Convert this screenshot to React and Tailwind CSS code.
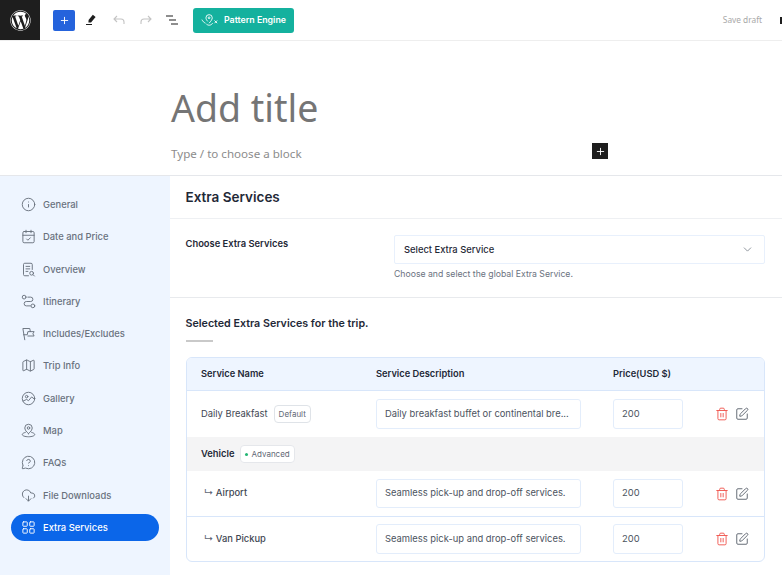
import React from 'react';
import { Info, CalendarCheck, Map as MapIcon, MessageCircleQuestion, CloudDownload, LayoutGrid, ChevronDown, Trash2, SquarePen, Plus } from 'lucide-react';
import { FaWordpress } from 'react-icons/fa';

const OverviewIcon = (props) => (
  <svg viewBox="0 0 24 24" fill="none" stroke="currentColor" strokeLinecap="round" strokeLinejoin="round" {...props}>
    <path d="M12 22H6a2 2 0 0 1-2-2V4a2 2 0 0 1 2-2h10a2 2 0 0 1 2 2v8" />
    <path d="M8 7h6M8 11h6M8 15h3" />
    <circle cx="17" cy="18" r="3" />
    <path d="m19.500 20.500 2 2" />
  </svg>
);

const ItineraryIcon = (props) => (
  <svg viewBox="0 0 24 24" fill="none" stroke="currentColor" strokeLinecap="round" strokeLinejoin="round" {...props}>
    <circle cx="5" cy="5" r="3" />
    <circle cx="19" cy="19" r="3" />
    <path d="M11 5h4.500a3.500 3.500 0 0 1 0 7h-7a3.500 3.500 0 0 0 0 7H15" />
  </svg>
);

const FlagsIcon = (props) => (
  <svg viewBox="0 0 24 24" fill="none" stroke="currentColor" strokeLinecap="round" strokeLinejoin="round" {...props}>
    <path d="M6 22 3 4h11l1 5" />
    <path d="M4 14h6l1-5h10l-2 3.500 2 3.500H11" />
  </svg>
);

const GalleryIcon = (props) => (
  <svg viewBox="0 0 24 24" fill="none" stroke="currentColor" strokeLinecap="round" strokeLinejoin="round" {...props}>
    <circle cx="12" cy="12" r="10" />
    <circle cx="9" cy="9" r="2" />
    <path d="M3.500 16 9 13.500l3 2 5-6 4.500 3.500" />
  </svg>
);

const MapPinIcon = (props) => (
  <svg viewBox="0 0 24 24" fill="none" stroke="currentColor" strokeLinecap="round" strokeLinejoin="round" {...props}>
    <path d="M12 17s-6-4.500-6-9a6 6 0 0 1 12 0c0 4.500-6 9-6 9Z" />
    <circle cx="12" cy="8" r="2" />
    <path d="M7 15c-3 .8-5 2-5 3.500C2 20.500 6.500 22 12 22s10-1.500 10-3.500c0-1.500-2-2.700-5-3.500" />
  </svg>
);

const navItems = [
  { label: 'General', Icon: Info },
  { label: 'Date and Price', Icon: CalendarCheck },
  { label: 'Overview', Icon: OverviewIcon },
  { label: 'Itinerary', Icon: ItineraryIcon },
  { label: 'Includes/Excludes', Icon: FlagsIcon },
  { label: 'Trip Info', Icon: MapIcon },
  { label: 'Gallery', Icon: GalleryIcon },
  { label: 'Map', Icon: MapPinIcon },
  { label: 'FAQs', Icon: MessageCircleQuestion },
  { label: 'File Downloads', Icon: CloudDownload },
  { label: 'Extra Services', Icon: LayoutGrid, active: true },
];

function Toolbar() {
  return (
    <div className="flex h-[41px] shrink-0 items-center border-b border-[#eeeeee] bg-white">
      <div className="flex h-10 w-10 items-center justify-center self-start bg-[#1e1e1e] text-white">
        <FaWordpress size={21} />
      </div>
      <div className="ml-[13px] flex h-[21px] w-[22px] items-center justify-center rounded-[2px] bg-[#2563dc] text-white">
        <Plus size={11} strokeWidth={2} />
      </div>
      {/* pencil */}
      <svg viewBox="0 0 12 12" className="ml-[10px] h-3 w-3 text-[#1e1e1e]" fill="currentColor">
        <path d="M7.800.800 10.600 3 6 8.400 3.400 8.600 3.600 6Z" />
        <rect x="1" y="10" width="6" height="1" />
      </svg>
      {/* undo */}
      <svg viewBox="0 0 12 10" className="ml-[16px] h-[10px] w-3 text-[#c4c4c4]" fill="none" stroke="currentColor" strokeWidth="1.100">
        <path d="M4 1 1 4l3 3M1 4h7c2 0 3 1.300 3 3v2" />
      </svg>
      {/* redo */}
      <svg viewBox="0 0 12 10" className="ml-[15px] h-[10px] w-3 text-[#c4c4c4]" fill="none" stroke="currentColor" strokeWidth="1.100">
        <path d="m8 1 3 3-3 3M11 4H4C2 4 1 5.300 1 7v2" />
      </svg>
      {/* list view */}
      <svg viewBox="0 0 13 10" className="ml-[14px] h-[10px] w-[13px] text-[#1e1e1e]" fill="none" stroke="currentColor" strokeWidth="1.200">
        <path d="M0 1h7M3 5h7M5 9h7" />
      </svg>
      <div className="ml-[14px] flex h-[25px] w-[101px] items-center justify-center gap-[5px] rounded-[3px] bg-[#14b19e] text-[8.800px] font-semibold text-white">
        <svg viewBox="0 0 20 14" className="h-[13px] w-[18px]" fill="none" stroke="currentColor" strokeWidth="1">
          <path d="M7.500 8c-1.300-1.500-2-2.700-2-4a3.500 3.500 0 0 1 7 0c0 1.800-1.500 3.800-3.500 6" />
          <circle cx="9" cy="4" r="1" />
          <path d="M1 6c1 2 2 3 4 4M6 11c2.500 2 5 1.500 7-1" />
          <path d="m15 7 3 3m0-3-3 3" />
        </svg>
        Pattern Engine
      </div>
      <div className="ml-auto flex items-center">
        <span className="font-['Noto_Sans',sans-serif] text-[8.300px] text-[#a8a8a8]">Save draft</span>
        <span className="ml-[18px] h-[7px] w-[2px] bg-[#1e1e1e]" />
      </div>
    </div>
  );
}

function TitleArea() {
  return (
    <div className="h-[135px] shrink-0 border-b border-[#e5e7eb] bg-white pl-[171px] pt-[41px] font-['Noto_Sans',sans-serif]">
      <div className="text-[37.500px] leading-[52px] text-[#757575]">Add title</div>
      <div className="mt-[9px] flex w-[437px] items-start justify-between">
        <span className="pt-[3px] text-[11.600px] leading-[16px] text-[#8c8c8c]">Type / to choose a block</span>
        <span className="flex h-4 w-4 items-center justify-center bg-[#1e1e1e] text-white">
          <Plus size={11} strokeWidth={2} />
        </span>
      </div>
    </div>
  );
}

function Sidebar() {
  return (
    <div className="flex h-full w-[170px] shrink-0 flex-col bg-[#eef5ff] pl-[11px] pt-[15px]">
      {navItems.map(({ label, Icon, active }) => (
        <div
          key={label}
          className={`mb-[5.300px] flex h-[27px] w-[148px] items-center gap-[7px] rounded-full pl-[10px] text-[9.400px] font-medium ${
            active ? 'bg-[#0b66e9] text-white' : 'text-[#69717d]'
          }`}
        >
          <Icon width={15} height={15} strokeWidth={1.500} />
          <span className="pt-[1px]">{label}</span>
        </div>
      ))}
    </div>
  );
}

function TextBox({ value, className }) {
  return (
    <div className={`flex h-[29.500px] items-center overflow-hidden rounded-[3px] border border-[#e3edfb] bg-white px-2 text-[9.400px] whitespace-nowrap text-[#4b5360] ${className}`}>
      {value}
    </div>
  );
}

function Actions() {
  return (
    <div className="flex items-center gap-[6px] pl-[32px]">
      <Trash2 size={14} strokeWidth={1.600} className="text-[#f0564f]" />
      <SquarePen size={14} strokeWidth={1.600} className="text-[#5b636e]" />
    </div>
  );
}

function ServiceRow({ name, children, desc, className }) {
  return (
    <div className={`grid grid-cols-[175px_237px_70px_1fr] items-center pl-[14.500px] ${className}`}>
      <div className="flex items-center gap-[6px]">{name}{children}</div>
      <TextBox value={desc} className="w-[205px]" />
      <TextBox value="200" className="w-[70px]" />
      <Actions />
    </div>
  );
}

function SubName({ label }) {
  return (
    <span className="pl-[3px] text-[9.400px] font-medium text-[#3f4753]">
      <span className="text-[#5f6875]">↳</span> {label}
    </span>
  );
}

function ExtraServices() {
  return (
    <div className="flex min-w-0 flex-1 flex-col bg-white text-[#1f2937]">
      <div className="flex h-[43px] items-center border-b border-[#eef0f3] px-[15.500px] text-[13.500px] font-semibold">Extra Services</div>
      <div className="flex h-[79px] border-b border-[#e8eaed] pl-[15.500px] pr-[17px] pt-[16px]">
        <div className="w-[208.500px] pt-[2px] text-[9.400px] leading-[14px] font-semibold">Choose Extra Services</div>
        <div className="flex-1">
          <div className="flex h-[29px] items-center justify-between rounded-[2px] border border-[#e8f0fc] pl-[9px] pr-[10px] text-[9.400px] font-medium">
            <span className="pt-[1px]">Select Extra Service</span>
            <ChevronDown size={13} strokeWidth={1.400} className="text-[#6f7782]" />
          </div>
          <p className="mt-[4px] text-[8.700px] text-[#6b7280]">Choose and select the global Extra Service.</p>
        </div>
      </div>
      <div className="pl-[15.500px] pr-[17px] pt-[18px]">
        <h3 className="text-[10.700px] leading-[15px] font-semibold">Selected Extra Services for the trip.</h3>
        <div className="mt-[9px] h-[2px] w-[27px] bg-[#c9c9c9]" />
        <div className="mt-[15px] overflow-hidden rounded-[6px] border border-[#d8e6fa]">
          <div className="grid h-[33px] grid-cols-[175px_237px_1fr] items-center border-b border-[#d8e6fa] bg-[#eef5ff] pl-[14.500px] text-[9.300px] font-semibold">
            <span>Service Name</span>
            <span>Service Description</span>
            <span>Price(USD $)</span>
          </div>
          <ServiceRow className="h-[46px]" name={<span className="text-[9.400px] text-[#3f4753]">Daily Breakfast</span>} desc="Daily breakfast buffet or continental bre...">
            <span className="rounded-[4px] border border-[#dfe3e8] px-[4px] py-[2px] text-[8px] text-[#5f6875]">Default</span>
          </ServiceRow>
          <div className="flex h-[34px] items-center gap-[6px] bg-[#f4f4f5] pl-[14.500px] text-[9.400px] font-semibold">
            Vehicle
            <span className="flex items-center gap-[3px] rounded-[4px] border border-[#e5e7eb] bg-white px-[4px] py-[2px] text-[8px] font-normal text-[#5f6875]">
              <span className="h-[3px] w-[3px] rounded-full bg-[#22b573]" />
              Advanced
            </span>
          </div>
          <ServiceRow className="h-[45px]" name={<SubName label="Airport" />} desc="Seamless pick-up and drop-off services." />
          <ServiceRow className="h-[45px] border-t border-[#d8e6fa]" name={<SubName label="Van Pickup" />} desc="Seamless pick-up and drop-off services." />
        </div>
      </div>
    </div>
  );
}

export default function App() {
  return (
    <div className="flex h-[575px] w-[782px] flex-col overflow-hidden bg-white font-['Inter',sans-serif]">
      <Toolbar />
      <TitleArea />
      <div className="flex min-h-0 flex-1">
        <Sidebar />
        <ExtraServices />
      </div>
    </div>
  );
}
